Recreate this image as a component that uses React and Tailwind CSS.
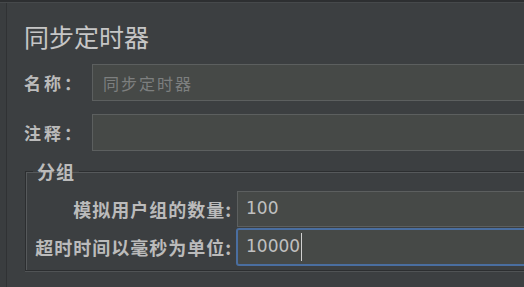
import React from "react";

const cjk = { fontFamily: '"Noto Sans CJK SC", "Noto Sans", sans-serif' };

function App() {
  return (
    <div className="w-[524px] h-[287px] overflow-hidden bg-[#3c3f41] flex flex-col text-[#bbbbbb]" style={cjk}>
      <div className="h-[3px] bg-[#2d2f31] border-b border-[#46494b]" />
      <div className="flex flex-1">
        <div className="w-[7px] shrink-0 bg-[#3a3d3f] border-r border-[#303234]" />
        <div className="w-[560px] shrink-0 pl-[17px] pt-[18px] flex flex-col">
          <div className="h-[30px] flex items-center text-[25px] leading-none text-[#c6c6c6]">同步定时器</div>

          <div className="mt-[13px] flex items-center">
            <div className="w-[68px] text-[17px] font-bold tracking-[3px] leading-none">名称：</div>
            <div className="flex-1 h-[37px] bg-[#464947] border border-[#5c5f5f] flex items-center pl-[10px] text-[16px] tracking-[2px] text-[#7d7f7f]">
              同步定时器
            </div>
          </div>

          <div className="mt-[13px] flex items-center">
            <div className="w-[68px] text-[17px] font-bold tracking-[3px] leading-none">注释：</div>
            <div className="flex-1 h-[37px] bg-[#464947] border border-[#5c5f5f]" />
          </div>

          <fieldset className="mt-[9px] ml-px border border-r-0 border-[#2c2e30] shadow-[inset_1px_1px_0_#56595b,0_1px_0_#505355] pb-[4px]">
            <legend className="ml-[7px] px-[4px] text-[18px] font-bold leading-[22px] tracking-[1px]">分组</legend>
            <div className="mt-[9px] flex items-center">
              <div className="w-[210px] text-right text-[18px] font-bold tracking-[1px] leading-none pr-[4px]">模拟用户组的数量:</div>
              <div className="flex-1 ml-px h-[36px] bg-[#464947] border border-[#5c5f5f] flex items-center pl-[8px] text-[17px] text-[#c0c0c0]" style={{ fontFamily: '"DejaVu Sans", sans-serif' }}>
                100
              </div>
            </div>
            <div className="mt-px flex items-center">
              <div className="w-[210px] text-right text-[18px] font-bold tracking-[1px] leading-none pr-[4px]">超时时间以毫秒为单位:</div>
              <div className="flex-1 h-[38px] bg-[#464947] border-2 border-[#4a6ea0] rounded-[3px] flex items-center pl-[8px] text-[17px] text-[#c0c0c0]" style={{ fontFamily: '"DejaVu Sans", sans-serif' }}>
                10000
                <span className="ml-px w-px h-[28px] bg-[#d0d0d0]" />
              </div>
            </div>
          </fieldset>
        </div>
      </div>
    </div>
  );
}

export default App;
